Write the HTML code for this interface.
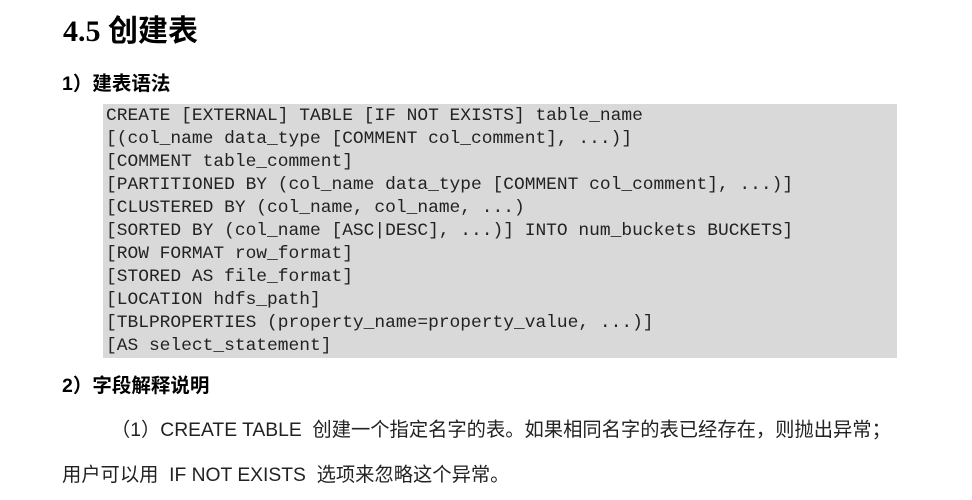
<!DOCTYPE html>
<html><head><meta charset="utf-8"><style>
body{margin:0;width:972px;height:500px;background:#fff;position:relative;overflow:hidden;color:#000;font-family:"Liberation Sans","Noto Sans CJK SC",sans-serif}
.a{position:absolute;white-space:pre}
h1{position:absolute;left:63px;top:6px;margin:0;font-size:30px;font-weight:bold;font-family:"Liberation Serif","Noto Sans CJK SC",serif}
h1 span{font-family:"Noto Sans CJK SC",sans-serif}
.h2{font-size:19.5px;font-weight:bold;left:62px}
.code{position:absolute;left:103px;top:104px;width:794px;height:254px;background:#d9d9d9}
.code div{position:absolute;left:3px;font-family:"Liberation Mono",monospace;font-size:17.9px;color:#222;white-space:pre;line-height:23px}
.p{font-size:19.3px;color:#222}
</style></head><body>
<h1>4.5 <span>创建表</span></h1>
<div class="a h2" style="top:67px">1）建表语法</div>
<div class="code"><div style="top:1px">CREATE [EXTERNAL] TABLE [IF NOT EXISTS] table_name
[(col_name data_type [COMMENT col_comment], ...)]
[COMMENT table_comment]
[PARTITIONED BY (col_name data_type [COMMENT col_comment], ...)]
[CLUSTERED BY (col_name, col_name, ...)
[SORTED BY (col_name [ASC|DESC], ...)] INTO num_buckets BUCKETS]
[ROW FORMAT row_format]
[STORED AS file_format]
[LOCATION hdfs_path]
[TBLPROPERTIES (property_name=property_value, ...)]
[AS select_statement]</div></div>
<div class="a h2" style="top:369px">2）字段解释说明</div>
<div class="a p" style="left:111px;top:414px">（1）CREATE TABLE  创建一个指定名字的表。如果相同名字的表已经存在，则抛出异常；</div>
<div class="a p" style="left:62px;top:459px">用户可以用  IF NOT EXISTS  选项来忽略这个异常。</div>
</body></html>
